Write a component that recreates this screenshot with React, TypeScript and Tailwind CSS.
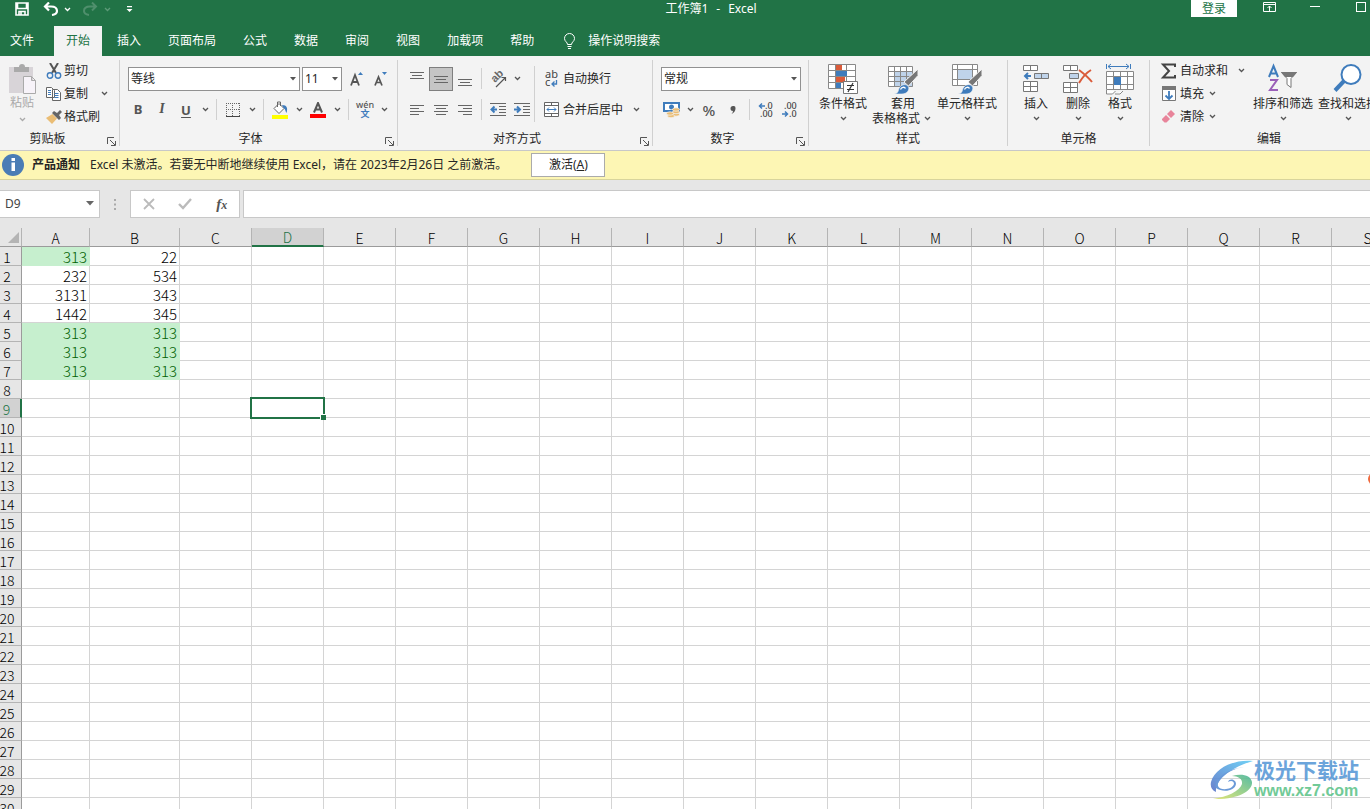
import type { ReactNode } from "react"
import clsx from "clsx"

const tabs = ["插入", "页面布局", "公式", "数据", "审阅", "视图", "加载项", "帮助"]
const columns = "ABCDEFGHIJKLMNOPQRS".split("")
const rowCount = 30
const selected = { col: "D", row: 9 }

const cells: Record<string, number> = {
    A1: 313, B1: 22,
    A2: 232, B2: 534,
    A3: 3131, B3: 343,
    A4: 1442, B4: 345,
    A5: 313, B5: 313,
    A6: 313, B6: 313,
    A7: 313, B7: 313,
}

const colWidth = (c: string) => (c === "A" ? "w-[68px]" : c === "B" ? "w-[90px]" : "w-[72px]")

function Chevron({ className = "w-3.5" }: { className?: string }) {
    return (
        <span className={clsx("flex justify-center", className)}>
            <svg width="7" height="5" viewBox="0 0 7 5" fill="none" stroke="currentColor" strokeWidth="1.3">
                <path d="M1 1l2.5 2.5L6 1" />
            </svg>
        </span>
    )
}

function Sep({ className = "mx-1 h-[21px]" }: { className?: string }) {
    return <span className={clsx("w-px shrink-0 bg-[#d0d0d0]", className)} />
}

function Tool({ label, children, active, drop }: { label: string; children: ReactNode; active?: boolean; drop?: boolean }) {
    return (
        <button aria-label={label} className="flex h-6 shrink-0 items-center text-[#555]">
            <span className={clsx("flex h-6 w-6 items-center justify-center", active && "border border-[#7f7f7f] bg-[#c5c5c5]")}>{children}</span>
            {drop && <Chevron />}
        </button>
    )
}

function BigTool({ label, children, lines, className }: { label: string; children: ReactNode; lines: string[]; className: string }) {
    return (
        <button aria-label={label} className={clsx("flex shrink-0 flex-col items-center pt-[3px] whitespace-nowrap", className)}>
            <span className="flex h-[34px] items-center">{children}</span>
            <span className="leading-[15px]">{lines[0]}</span>
            <span className="flex h-[15px] items-center leading-[15px]">
                {lines[1]}
                <Chevron className="w-3.5 text-[#555]" />
            </span>
        </button>
    )
}

function Combo({ label, value, className }: { label: string; value: string; className: string }) {
    return (
        <span className={clsx("relative flex h-6", className)}>
            <select aria-label={label} defaultValue={value} className="w-full appearance-none border border-[#919191] bg-white pl-0.5 text-xs text-[#262626]">
                <option>{value}</option>
            </select>
            <svg className="pointer-events-none absolute top-[10px] right-1" width="6" height="4" viewBox="0 0 6 4" fill="#555">
                <path d="M0 0h6L3 3.5z" />
            </svg>
        </span>
    )
}

function Group({ label, className, children, launcher, labelClass }: { label: string; className: string; children: ReactNode; launcher?: boolean; labelClass?: string }) {
    return (
        <section aria-label={label} className={clsx("flex shrink-0 pt-[3px]", className)}>
            <div className="flex min-w-0 flex-1 flex-col">
                <div className="flex h-[69px] shrink-0">{children}</div>
                <div className={clsx("relative flex h-[23px] items-center justify-center leading-4", labelClass)}>
                    <span>{label}</span>
                    {launcher && (
                        <button aria-label={`${label}设置`} className="absolute right-[3px] bottom-1">
                            <svg width="9" height="9" viewBox="0 0 9 9" fill="none" stroke="#555">
                                <path d="M.5 7V.5H7M3 3l5 5M8.500 4v4.500H4" />
                            </svg>
                        </button>
                    )}
                </div>
            </div>
            <Sep className="mt-px h-[86px] bg-[#b1b1b1]" />
        </section>
    )
}

// one entry per stroke: [start, end, y]
function Lines({ rows }: { rows: number[][] }) {
    return (
        <svg width="16" height="14" viewBox="0 0 16 14" stroke="#666">
            {rows.map(([a, b, y], i) => (
                <path key={i} d={`M${a} ${y + 0.5}H${b}`} />
            ))}
        </svg>
    )
}

function Brush() {
    return (
        <>
            <path d="M31 6v6.500L21.500 23 17 19z" fill="#777" stroke="#f3f3f3" />
            <path d="M7 31c4-.5 4-2.500 5-5.500 1.500-4 6.500-5 9-2.500 2.500 3.500-1 8-6 8z" fill="#3f7cbc" stroke="#f3f3f3" strokeWidth=".6" />
            <path d="M13.500 26.500c1-2.500 4-3 5-1" fill="none" stroke="#fff" strokeWidth="1.300" />
        </>
    )
}

function TitleBar() {
    return (
        <div className="grid h-[26px] w-[calc(100%+52px)] grid-cols-[1fr_auto_1fr] items-start text-white">
            <div className="flex h-[18px] items-center pl-3.5">
                <button aria-label="保存" className="flex h-4 w-4 items-center justify-center">
                    <svg width="14" height="14" viewBox="0 0 14 14" fill="none" stroke="#fff" strokeWidth="1.600">
                        <path d="M1 1h12v12H1zM2.500 1v5.500h9V1M4 13V9.500h6V13M6 10v3" />
                    </svg>
                </button>
                <button aria-label="撤消" className="ml-3 flex items-center">
                    <svg width="18" height="14" viewBox="0 0 18 14" fill="none" stroke="#fff" strokeWidth="2.200">
                        <path d="M7 .5L3 4.500l4 4M3 4.500h6c4.500 0 6 2 6 4.500 0 2-1.500 3.500-5 4" />
                    </svg>
                    <Chevron />
                </button>
                <button aria-label="恢复" className="ml-2 flex items-center text-[#5d9a78]">
                    <svg width="18" height="14" viewBox="0 0 18 14" fill="none" stroke="#4f8f6c" strokeWidth="2">
                        <path d="M10 .5l4 4-4 4M14 4.500H8C3.500 4.500 2 6.500 2 9c0 2 1.500 3.500 5 4" />
                    </svg>
                    <Chevron />
                </button>
                <button aria-label="自定义快速访问工具栏" className="ml-3 flex">
                    <svg width="7" height="7" viewBox="0 0 7 7" fill="#fff"><path d="M1 0h5v1.300H1zM.5 3h6L3.500 6z" /></svg>
                </button>
            </div>
            <h1 className="flex gap-2 leading-[18px]">
                <span>工作簿1</span>
                <span>-</span>
                <span>Excel</span>
            </h1>
            <div className="flex justify-end pr-[38px]">
                <button className="mr-[9px] h-[17px] w-[46px] bg-white leading-4 text-[#217346]">登录</button>
                <button aria-label="功能区显示选项" className="flex h-4 w-[46px] items-start justify-center pt-0.5">
                    <svg width="13" height="10" viewBox="0 0 13 10" fill="none" stroke="#fff"><path d="M.5.5h12v9H.5zM.5 2.500h12M6.500 9V4M4.500 6l2-2 2 2" /></svg>
                </button>
                <button aria-label="最小化" className="flex h-4 w-[46px] items-start justify-center pt-1.5">
                    <span className="h-px w-2.5 bg-white" />
                </button>
                <button aria-label="最大化" className="flex h-4 w-[46px] items-start justify-center pt-0.5">
                    <span className="h-2.5 w-2.5 border border-white" />
                </button>
            </div>
        </div>
    )
}

function TabBar() {
    return (
        <nav className="flex h-[30px] gap-[3px] text-white">
            <button className="px-2.5">文件</button>
            <button className="ml-[7px] bg-[#f3f3f3] px-3 text-[#217346]">开始</button>
            {tabs.map(t => (
                <button key={t} className="px-3 whitespace-nowrap">{t}</button>
            ))}
            <button className="ml-3.5 flex items-center gap-3">
                <svg width="13" height="16" viewBox="0 0 13 16" fill="none" stroke="#fff">
                    <path d="M4.500 11.500C4.500 9 1.500 8.500 1.500 5.500a5 5 0 0110 0c0 3-3 3.500-3 6zM4.500 13.500h4M5 15.500h3" />
                </svg>
                操作说明搜索
            </button>
        </nav>
    )
}

function Ribbon() {
    return (
        <div className="flex h-[94px] overflow-hidden bg-[#f3f3f3] text-[#262626]">
            <Group label="剪贴板" launcher className="w-[120px]" labelClass="pr-6">
                <button className="flex w-11 flex-col items-center pt-1 text-[#aaa]">
                    <svg width="30" height="32" viewBox="0 0 30 32">
                        <path d="M2 4h24v26H2z" fill="#d8d4d8" />
                        <path d="M7 9V4h5a3 3 0 016 0h4v5z" fill="#aaa" />
                        <path d="M16.500 13.500h8l4 4v13h-12zM24.500 13.500v4h4" fill="#f7f3f9" stroke="#aaa" />
                    </svg>
                    <span className="leading-4">粘贴</span>
                    <Chevron className="mt-1.5 w-3.5" />
                </button>
                <div className="flex flex-col">
                    <button className="flex h-[23px] items-center gap-0.5 pl-0.5">
                        <svg width="16" height="16" viewBox="0 0 16 16" fill="none">
                            <path d="M4 0l6 10M12 0L6 10" stroke="#555" strokeWidth="2" />
                            <circle cx="4" cy="12.500" r="2.700" stroke="#3f7cbc" strokeWidth="1.400" />
                            <circle cx="12" cy="12.500" r="2.700" stroke="#3f7cbc" strokeWidth="1.400" />
                        </svg>
                        剪切
                    </button>
                    <button className="flex h-[23px] items-center gap-0.5 pl-0.5">
                        <svg width="16" height="14" viewBox="0 0 16 14" fill="#fff" stroke="#666">
                            <path d="M.5.5h5l3 3v7h-8zM6.500 2.500h5l3 3v8h-8z" />
                            <path d="M2 3.500h3M2 5.500h3M2 7.500h3M8.500 6.500h4M8.500 8.500h4M8.500 10.500h4" stroke="#3f7cbc" />
                        </svg>
                        复制
                        <Chevron className="ml-2 w-3 text-[#555]" />
                    </button>
                    <button className="flex h-[23px] items-center gap-0.5 pl-0.5">
                        <svg width="16" height="14" viewBox="0 0 16 14">
                            <path d="M6.500 4l4.500 4.500L6 14 0 8z" fill="#eabd75" />
                            <path d="M6 3l2-2 3 2 3-3 2 2-3 3 2 3-2 2z" fill="#666" />
                        </svg>
                        格式刷
                    </button>
                </div>
            </Group>

            <Group label="字体" launcher className="w-[278px]" labelClass="pr-4">
                <div className="flex flex-col pt-1">
                    <div className="flex h-[31px] items-center pl-2">
                        <Combo label="字体" value="等线" className="mr-0.5 w-[172px]" />
                        <Combo label="字号" value="11" className="mr-[3px] w-10" />
                        <Tool label="增大字号">
                            <svg width="16" height="16" viewBox="0 0 16 16"><path d="M2 14.500L6 4l4 10.500M3.500 11h5" fill="none" stroke="#555" strokeWidth="1.800" /><path d="M9 4l2.500-3L14 4z" fill="#3f7cbc" /></svg>
                        </Tool>
                        <Tool label="减小字号">
                            <svg width="16" height="16" viewBox="0 0 16 16"><path d="M2 14.500L5.500 6 9 14.500M3.500 11.500h4" fill="none" stroke="#555" strokeWidth="1.700" /><path d="M9 1h5l-2.500 3z" fill="#3f7cbc" /></svg>
                        </Tool>
                    </div>
                    <div className="flex h-[31px] items-center pl-1.5">
                        <Tool label="加粗"><b className="text-[13px]">B</b></Tool>
                        <Tool label="倾斜"><i className="font-['Liberation_Serif',serif] text-[14px] font-bold">I</i></Tool>
                        <Tool label="下划线" drop><b className="text-[13px] leading-[14px] underline underline-offset-2">U</b></Tool>
                        <Sep />
                        <Tool label="边框" drop>
                            <svg width="14" height="14" viewBox="0 0 14 14" stroke="#666"><path d="M.5 0v13M13.500 0v13M0 .5h14M0 6.500h14M6.500 0v13" strokeDasharray="1 1" /><path d="M0 13.500h14" stroke="#444" /></svg>
                        </Tool>
                        <Sep />
                        <Tool label="填充颜色" drop>
                            <svg width="16" height="18" viewBox="0 0 16 18">
                                <path d="M7 2.500l5 5-5 5-5-5zM5.500 6V1h3v4" fill="#fff" stroke="#666" />
                                <path d="M10 4c5 0 6 3 4.500 8-1-1-1-4-3-5z" fill="#3f7cbc" />
                                <path d="M0 14h16v4H0z" fill="#ff0" />
                            </svg>
                        </Tool>
                        <Tool label="字体颜色" drop>
                            <svg width="16" height="16" viewBox="0 0 16 16"><path d="M4 10.500L8 1l4 9.500M5.500 7.500h5" fill="none" stroke="#555" strokeWidth="2" /><path d="M0 12h16v4H0z" fill="red" /></svg>
                        </Tool>
                        <Sep />
                        <Tool label="拼音" drop>
                            <svg width="20" height="24" viewBox="0 0 20 24" textAnchor="middle" fontSize="9" fontWeight="500">
                                <text fill="#555">
                                    <tspan x="10" y="10">wén</tspan>
                                    <tspan x="10" y="19" fill="#3f7cbc" fontWeight="700">文</tspan>
                                </text>
                            </svg>
                        </Tool>
                    </div>
                </div>
            </Group>

            <Group label="对齐方式" launcher className="w-[255px]" labelClass="pr-4">
                <div className="flex pl-[7px]">
                    <div className="flex flex-col pt-1">
                        <div className="flex h-[31px] items-center">
                            <Tool label="顶端对齐"><Lines rows={[[1, 15, 0], [3, 13, 3], [1, 15, 6]]} /></Tool>
                            <Tool label="垂直居中" active><Lines rows={[[1, 15, 4], [3, 13, 7], [1, 15, 10]]} /></Tool>
                            <Tool label="底端对齐"><Lines rows={[[1, 15, 7], [3, 13, 10], [1, 15, 13]]} /></Tool>
                            <Sep />
                            <Tool label="方向" drop>
                                <svg width="20" height="20" viewBox="0 0 20 20">
                                    <text x="0" y="0" fontSize="11" fontWeight="600" fill="#666" transform="translate(7 14) rotate(-45)" fontFamily="Liberation Sans, sans-serif">ab</text>
                                    <path d="M8 18l9-9M13.500 8.500h4V12" fill="none" stroke="#555" strokeWidth="1.200" />
                                </svg>
                            </Tool>
                        </div>
                        <div className="flex h-[31px] items-center">
                            <Tool label="左对齐"><Lines rows={[[1, 15, 2], [1, 10, 5], [1, 15, 8], [1, 10, 11]]} /></Tool>
                            <Tool label="居中"><Lines rows={[[1, 15, 2], [3, 13, 5], [1, 15, 8], [3, 13, 11]]} /></Tool>
                            <Tool label="右对齐"><Lines rows={[[1, 15, 2], [6, 15, 5], [1, 15, 8], [6, 15, 11]]} /></Tool>
                            <Sep />
                            <Tool label="减少缩进量">
                                <svg width="16" height="14" viewBox="0 0 16 14" fill="none" stroke="#666"><path d="M0 .5h16M9 3.500h7M9 6.500h7M9 9.500h7M0 12.500h16" /><path d="M7 6.500H2M4.500 3.500l-3 3 3 3" stroke="#3f7cbc" strokeWidth="2" /></svg>
                            </Tool>
                            <Tool label="增加缩进量">
                                <svg width="16" height="14" viewBox="0 0 16 14" fill="none" stroke="#666"><path d="M0 .5h16M9 3.500h7M9 6.500h7M9 9.500h7M0 12.500h16" /><path d="M0 6.500h5M3 3.500l3 3-3 3" stroke="#3f7cbc" strokeWidth="2" /></svg>
                            </Tool>
                        </div>
                    </div>
                    <Sep className="mt-[7px] mr-1 h-14" />
                    <div className="flex flex-col pt-1">
                        <button className="flex h-[31px] items-center">
                            <span className="flex w-6 justify-center">
                                <svg width="16" height="20" viewBox="0 0 16 20">
                                    <text fontSize="11" fill="#444" fontFamily="Noto Sans, sans-serif">
                                        <tspan x="2" y="9">ab</tspan>
                                        <tspan x="2" y="17">c</tspan>
                                    </text>
                                    <path d="M13.500 11v4H9M11.500 12.500L9 15l2.500 2.500" fill="none" stroke="#3f7cbc" strokeWidth="1.300" />
                                </svg>
                            </span>
                            自动换行
                        </button>
                        <button className="flex h-[31px] items-center">
                            <span className="flex w-6 justify-center">
                                <svg width="15" height="15" viewBox="0 0 15 15" fill="#fff" stroke="#666">
                                    <path d="M.5.5h14v14H.5zM.5 3.500h14M.5 11.500h14M7.500 0v3.500M7.500 11.500V15" />
                                    <path d="M3 7.500h9M5 5.500l-2 2 2 2M10 5.500l2 2-2 2" fill="none" stroke="#3f7cbc" />
                                </svg>
                            </span>
                            合并后居中
                            <Chevron className="ml-1.5 w-3.5 text-[#555]" />
                        </button>
                    </div>
                </div>
            </Group>

            <Group label="数字" launcher className="w-[156px]" labelClass="pr-4">
                <div className="flex flex-1 flex-col pt-1">
                    <div className="flex h-[31px] items-center px-2">
                        <Combo label="数字格式" value="常规" className="w-[140px]" />
                    </div>
                    <div className="flex h-[31px] items-center pl-1.5">
                        <Tool label="会计数字格式" drop>
                            <svg width="17" height="16" viewBox="0 0 17 16">
                                <path d="M1 1h15v8H1z" fill="#fff" stroke="#3f7cbc" strokeWidth="2" />
                                <circle cx="8.500" cy="5" r="2.500" fill="#3f7cbc" />
                                <g fill="#eabd75" stroke="#f3f3f3" strokeWidth=".7">
                                    <ellipse cx="13" cy="12.500" rx="3.500" ry="1.700" /><ellipse cx="13" cy="10" rx="3.500" ry="1.700" /><ellipse cx="13" cy="7.500" rx="3.500" ry="1.700" />
                                    <ellipse cx="8" cy="14" rx="3.500" ry="1.700" /><ellipse cx="7" cy="11.500" rx="3.500" ry="1.700" />
                                </g>
                            </svg>
                        </Tool>
                        <Tool label="百分比样式"><span className="text-[15px] font-medium">%</span></Tool>
                        <Tool label="千位分隔样式">
                            <svg width="6" height="8" viewBox="0 0 6 8"><path d="M3 0a2.300 2.300 0 012.500 2.500C5.500 5 4 7 1.500 8 2.500 7 3 6 3 5A2.400 2.400 0 013 0z" fill="#555" /></svg>
                        </Tool>
                        <Sep />
                        <Tool label="增加小数位数">
                            <svg width="18" height="20" viewBox="0 0 18 20">
                                <path d="M8 6H3M5 3.500L2.500 6 5 8.500" fill="none" stroke="#3f7cbc" strokeWidth="1.500" />
                                <text fontSize="9" fontWeight="500" fill="#444">
                                    <tspan x="8" y="9">.0</tspan>
                                    <tspan x="3" y="17">.00</tspan>
                                </text>
                            </svg>
                        </Tool>
                        <Tool label="减少小数位数">
                            <svg width="18" height="20" viewBox="0 0 18 20">
                                <path d="M1 14h5M4 11.500L6.500 14 4 16.500" fill="none" stroke="#3f7cbc" strokeWidth="1.500" />
                                <text fontSize="9" fontWeight="500" fill="#444">
                                    <tspan x="3" y="9">.00</tspan>
                                    <tspan x="8" y="17">.0</tspan>
                                </text>
                            </svg>
                        </Tool>
                    </div>
                </div>
            </Group>

            <Group label="样式" className="w-[199px]">
                <div className="flex pl-1">
                    <BigTool label="条件格式" lines={["条件格式"]} className="w-[60px]">
                        <svg width="32" height="32" viewBox="0 0 32 32">
                            <path d="M1.500 1.500h27v24h-27zM8.500 1v25M19.500 1v25M1.500 7.500h27M1.500 13.500h27M1.500 19.500h27" fill="#fff" stroke="#888" />
                            <path d="M9 2h6v5H9zM9 14h9v5H9z" fill="#da5b3a" />
                            <path d="M9 8h11v5H9zM9 20h5v5H9z" fill="#3f7cbc" />
                            <path d="M16.500 18.500h14v12h-14z" fill="#fff" stroke="#777" />
                            <path d="M20 22.500h7M20 26.500h7M26 20l-5 9" stroke="#333" strokeWidth="1.200" />
                        </svg>
                    </BigTool>
                    <BigTool label="套用表格格式" lines={["套用", "表格格式"]} className="w-[60px]">
                        <svg width="32" height="32" viewBox="0 0 32 32">
                            <path d="M1.500 3.500h24v20h-24z" fill="#fff" />
                            <path d="M8 9h18v15H8z" fill="#bfd3ea" />
                            <path d="M1.500 3.500h24v20h-24zM7.500 3v21M13.500 3v21M19.500 3v21M1.500 8.500h24M1.500 13.500h24M1.500 18.500h24" fill="none" stroke="#888" />
                            <Brush />
                        </svg>
                    </BigTool>
                    <BigTool label="单元格样式" lines={["单元格样式"]} className="ml-1 w-[60px]">
                        <svg width="32" height="32" viewBox="0 0 32 32">
                            <path d="M1.500 1.500h25v21h-25zM6.500 1v22M21.500 1v22M1.500 6.500h25M1.500 16.500h25" fill="#fff" stroke="#888" />
                            <path d="M7 7h14v9H7z" fill="#bfd3ea" />
                            <Brush />
                        </svg>
                    </BigTool>
                </div>
            </Group>

            <Group label="单元格" className="w-[142px]">
                <div className="flex pl-[7px]">
                    <BigTool label="插入单元格" lines={["插入"]} className="w-[42px]">
                        <svg width="28" height="32" viewBox="0 0 28 32" stroke="#777">
                            <path d="M1.500 2.500h14v5h-14zM8.500 2v6M1.500 18.500h14v10h-14zM1.500 23.500h14M8.500 18v11" fill="#fff" />
                            <path d="M12.500 10.500h14v5h-14zM19.500 10v6" fill="#bfd3ea" />
                            <path d="M9 13H3M6 10l-3 3 3 3" fill="none" stroke="#3f7cbc" strokeWidth="2" />
                        </svg>
                    </BigTool>
                    <BigTool label="删除单元格" lines={["删除"]} className="w-[42px]">
                        <svg width="30" height="32" viewBox="0 0 30 32" stroke="#777">
                            <path d="M.5 2.500h14v5H.5zM7.500 2v6M.5 19.500h14v10H.5zM.5 24.500h14M7.500 19v11" fill="#fff" />
                            <path d="M6.500 10.500h9v5h-9z" fill="#bfd3ea" />
                            <path d="M16 7c4 3 9 7 13 12M28 7c-5 3-9 8-12 13" fill="none" stroke="#da5b3a" strokeWidth="2" />
                        </svg>
                    </BigTool>
                    <BigTool label="单元格格式" lines={["格式"]} className="w-[42px]">
                        <svg width="30" height="32" viewBox="0 0 30 32">
                            <path d="M1.500 1v5M25.500 1v5M3 3.500h21M6 1L3 3.500 6 6M21 1l3 2.500L21 6" fill="none" stroke="#3f7cbc" />
                            <path d="M1.500 8.500h27v18h-27zM8.500 8v19M15.500 8v19M22.500 8v19M1.500 13.500h27M1.500 21.500h27" fill="#fff" stroke="#888" />
                            <path d="M9 14h7v8H9z" fill="#3f7cbc" />
                            <path d="M1.500 27v4h6l3-3M10 31h5l3-3" fill="#fff" stroke="#888" />
                        </svg>
                    </BigTool>
                </div>
            </Group>

            <Group label="编辑" className="w-[239px]">
                <div className="flex w-[91px] shrink-0 flex-col pl-2.5 whitespace-nowrap">
                    <button className="flex h-[23px] items-center gap-0.5">
                        <svg className="shrink-0" width="18" height="16" viewBox="0 0 18 16"><path d="M15 4V1.500H3L9 8l-6 6.500h12V12" fill="none" stroke="#444" strokeWidth="2" /></svg>
                        自动求和
                        <Chevron className="ml-2 w-3 text-[#555]" />
                    </button>
                    <button className="flex h-[23px] items-center gap-0.5">
                        <svg width="18" height="16" viewBox="0 0 18 16"><path d="M2.500.5h13v14h-13z" fill="#fff" stroke="#777" /><path d="M2 0h14v4H2z" fill="#777" /><path d="M9 5v8M5.500 9.500L9 13l3.500-3.500" fill="none" stroke="#3f7cbc" strokeWidth="1.800" /></svg>
                        填充
                        <Chevron className="w-3 text-[#555]" />
                    </button>
                    <button className="flex h-[23px] items-center gap-0.5">
                        <svg width="18" height="14" viewBox="0 0 18 14"><path d="M11 0l4 4-4 4-4-4z" fill="#e8849a" /><path d="M6 5l4 4-3.500 3.500h-2L2 10V9z" fill="#e8849a" /></svg>
                        清除
                        <Chevron className="w-3 text-[#555]" />
                    </button>
                </div>
                <BigTool label="排序和筛选" lines={["排序和筛选"]} className="ml-2.5 w-[64px]">
                    <svg width="30" height="32" viewBox="0 0 30 32" fill="none">
                        <path d="M1 14L5.500 3 10 14M2.500 10.500h6" stroke="#3f7cbc" strokeWidth="2" />
                        <path d="M2 17h7L2 27h8" stroke="#9a5fb8" strokeWidth="2" />
                        <path d="M13.500 9.500h15l-5.500 6v9l-4-3v-6z" fill="#fff" stroke="#777" />
                        <path d="M13 9h16l-4 5h-8z" fill="#777" />
                    </svg>
                </BigTool>
                <BigTool label="查找和选择" lines={["查找和选择"]} className="ml-px w-[64px]">
                    <svg width="30" height="32" viewBox="0 0 30 32" fill="none" stroke="#3f7cbc">
                        <circle cx="18" cy="11.500" r="9.500" fill="#fff" strokeWidth="2" />
                        <path d="M11 18L2 27.500" strokeWidth="4" />
                    </svg>
                </BigTool>
            </Group>
        </div>
    )
}

function Notice() {
    return (
        <div className="flex h-[30px] items-center border-t border-b border-t-[#c8c8c8] border-b-[#d8d49c] bg-[#fdf6b4] text-[#262626]">
            <svg className="ml-0.5 shrink-0" width="22" height="22" viewBox="0 0 22 22">
                <circle cx="11" cy="11" r="11" fill="#4a7db5" />
                <path d="M9.500 4h3.500v3H9.500zM9.500 8.500h3.500V17H9.500z" fill="#fff" />
            </svg>
            <b className="ml-2">产品通知</b>
            <span className="ml-2.5">Excel 未激活。若要无中断地继续使用 Excel，请在 2023年2月26日 之前激活。</span>
            <button className="ml-6 h-6 w-[74px] border border-[#ababab] bg-white">激活(<u>A</u>)</button>
        </div>
    )
}

function FormulaBar() {
    return (
        <div className="flex h-12 items-center bg-[#e6e6e6]">
            <div className="relative flex h-7 w-[100px]">
                <input aria-label="名称框" defaultValue="D9" className="w-full border border-l-0 border-[#c8c8c8] bg-white pl-[5px] text-[#444]" />
                <svg className="absolute top-[11px] right-1.5" width="8" height="5" viewBox="0 0 8 5" fill="#666"><path d="M0 0h8L4 4.500z" /></svg>
            </div>
            <svg className="mx-3.5" width="2" height="11" viewBox="0 0 2 11" fill="#aaa"><path d="M0 0h2v2H0zM0 4.500h2v2H0zM0 9h2v2H0z" /></svg>
            <div className="flex h-7 w-[110px] items-center justify-around border border-[#c8c8c8] bg-white">
                <button aria-label="取消">
                    <svg width="12" height="12" viewBox="0 0 12 12" stroke="#bbb" strokeWidth="1.800"><path d="M1 1l10 10M11 1L1 11" /></svg>
                </button>
                <button aria-label="输入">
                    <svg width="14" height="12" viewBox="0 0 14 12" fill="none" stroke="#bbb" strokeWidth="2.400"><path d="M1 6l4 4 8-9" /></svg>
                </button>
                <button aria-label="插入函数" className="font-['Liberation_Serif',serif] text-[15px] leading-4 font-bold text-[#555] italic">
                    f<span className="text-[12px]">x</span>
                </button>
            </div>
            <input aria-label="编辑栏" className="ml-[3px] h-7 flex-1 border border-r-0 border-[#c8c8c8] bg-white px-1" />
        </div>
    )
}

function Sheet() {
    return (
        <table className="w-max table-fixed border-separate border-spacing-0 text-[15px] leading-4 font-light text-black">
            <thead>
                <tr className="h-[19px]">
                    <th aria-label="全选" className="w-[22px] border-r border-b border-r-[#b4b4b4] border-b-[#9b9b9b] bg-[#e6e6e6] p-0">
                        <svg className="ml-2" width="11" height="11" viewBox="0 0 11 11"><path d="M11 0v11H0z" fill="#b4b4b4" /></svg>
                    </th>
                    {columns.map(c => (
                        <th
                            key={c}
                            className={clsx(
                                "border-r border-r-[#b4b4b4] p-0 pt-px text-[14px] font-light",
                                colWidth(c),
                                c === selected.col ? "border-b-2 border-b-[#217346] bg-[#d2d2d2] text-[#217346]" : "border-b border-b-[#9b9b9b] bg-[#e6e6e6]"
                            )}
                        >
                            {c}
                        </th>
                    ))}
                </tr>
            </thead>
            <tbody>
                {Array.from({ length: rowCount }, (_, i) => i + 1).map(r => (
                    <tr key={r} className="h-[19px]">
                        <th
                            className={clsx(
                                "border-b border-b-[#b4b4b4] p-0 pt-0.5 pr-[7px] text-[14px] font-light",
                                r === selected.row ? "border-r-2 border-r-[#217346] bg-[#d2d2d2] text-[#217346]" : "border-r border-r-[#9b9b9b] bg-[#e6e6e6]"
                            )}
                        >
                            <span className="-mx-1 block">{r}</span>
                        </th>
                        {columns.map(c => {
                            const value = cells[c + r]
                            const isSelected = c === selected.col && r === selected.row
                            return (
                                <td
                                    key={c}
                                    className={clsx(
                                        "relative border-r border-b p-0 pt-0.5 pr-0.5 text-right",
                                        value === 313 ? "border-[#c6efce] bg-[#c6efce] text-[#006100]" : "border-[#d4d4d4]"
                                    )}
                                >
                                    {value}
                                    {isSelected && (
                                        <div className="absolute -inset-0.5 z-10 border-2 border-[#217346]">
                                            <span className="absolute -right-[3px] -bottom-[3px] h-1.5 w-1.5 border-t border-l border-white bg-[#217346]" />
                                        </div>
                                    )}
                                </td>
                            )
                        })}
                    </tr>
                ))}
            </tbody>
        </table>
    )
}

function Watermark() {
    return (
        <div className="absolute right-[11px] bottom-2 z-20 flex items-center opacity-90">
            <svg width="44" height="40" viewBox="0 0 44 40">
                <defs>
                    <linearGradient id="swirlTop" x1="0" y1="1" x2="1" y2="0">
                        <stop offset="0" stopColor="#5a74c8" />
                        <stop offset="1" stopColor="#62cdf5" />
                    </linearGradient>
                    <linearGradient id="swirlBottom" x1="1" y1="0" x2="0" y2="1">
                        <stop offset="0" stopColor="#45b59a" />
                        <stop offset="1" stopColor="#e4e66a" />
                    </linearGradient>
                </defs>
                <path d="M43 1C26-1 5 7 1 22c-1 5 1 8 5 10C5 21 19 8 43 1z" fill="url(#swirlTop)" />
                <path d="M34 7C20 9 7 18 8 26c2 5 14 4 16-2 0-3-3-4-6-2 1-4 8-3 8 2-1 7-13 9-20 4C3 20 16 9 34 7z" fill="#5a8fd4" />
                <path d="M22 16c9-3 19-1 20 6 1 9-15 18-39 17 14-2 27-8 29-15 1-5-4-8-10-8z" fill="url(#swirlBottom)" />
            </svg>
            <div className="flex flex-col whitespace-nowrap">
                <span className="text-[21px] leading-[22px] font-bold text-[#5b9bd8]">极光下载站</span>
                <span className="font-['Liberation_Sans',sans-serif] text-[16px] leading-5 font-bold text-[#62c58c]">www.xz7.com</span>
            </div>
        </div>
    )
}

export default function App() {
    return (
        <div className="relative flex h-screen flex-col overflow-hidden bg-white font-['Noto_Sans','Noto_Sans_CJK_SC',sans-serif] text-xs">
            <header className="shrink-0 overflow-hidden bg-[#217346]">
                <TitleBar />
                <TabBar />
            </header>
            <div className="shrink-0">
                <Ribbon />
                <Notice />
                <FormulaBar />
            </div>
            <main className="min-h-0 flex-1 overflow-hidden font-['Noto_Sans_CJK_SC',sans-serif]">
                <Sheet />
            </main>
            <span className="absolute top-[473px] -right-2.5 z-20 h-3 w-3 rounded-full bg-[#f0693c]" />
            <Watermark />
        </div>
    )
}
